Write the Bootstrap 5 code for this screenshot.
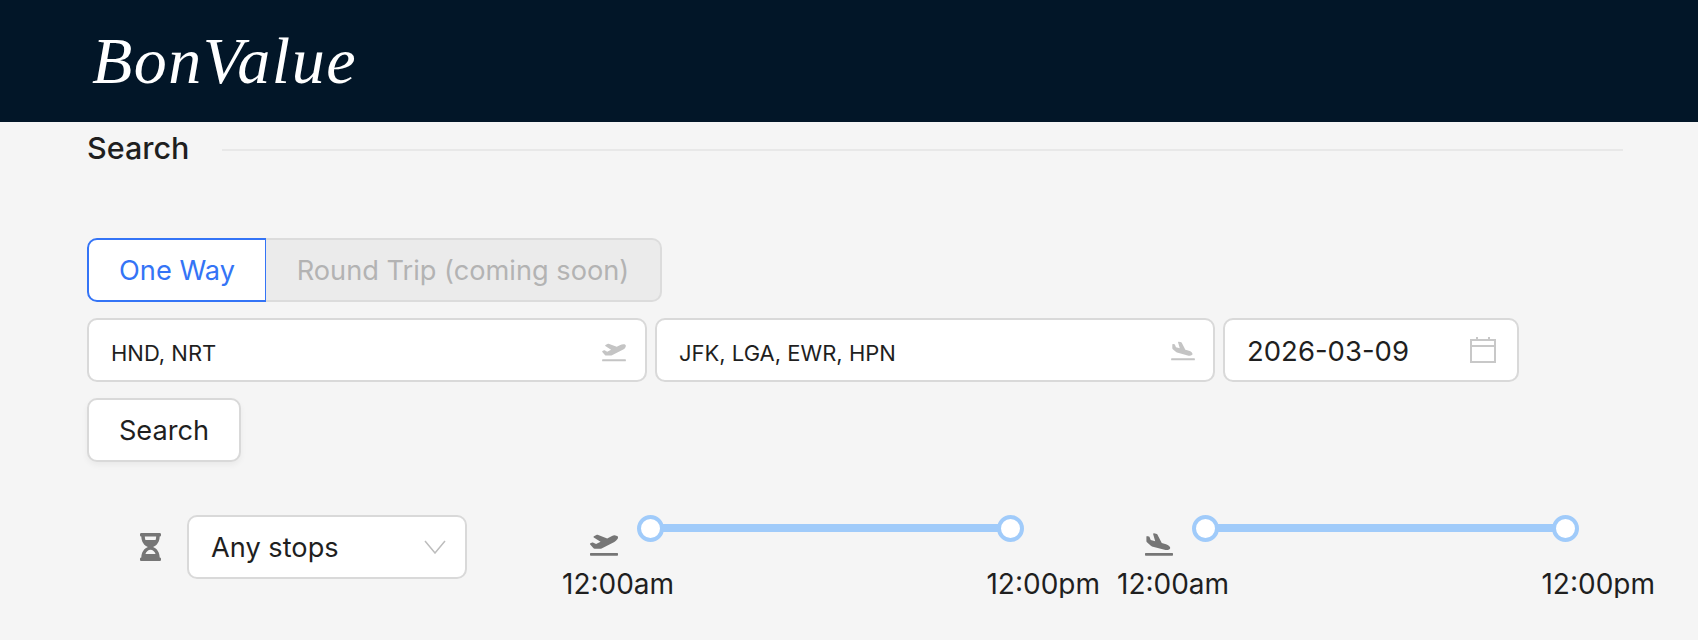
<!DOCTYPE html>
<html lang="en">
<head>
  <meta charset="UTF-8" />
  <meta name="viewport" content="width=device-width, initial-scale=1.0" />
  <title>BonValue</title>
  <link href="https://cdn.jsdelivr.net/npm/bootstrap@5.3.3/dist/css/bootstrap.min.css" rel="stylesheet" />
  <style>
    body {
      background-color: #f5f5f5;
      color: #1f1f1f;
      font-family: "Inter", "Liberation Sans", sans-serif;
      font-size: 27.5px;
    }

    .top-bar {
      background-color: #021628;
      height: 122px;
      padding: 0 0 0 92px;
    }

    .brand-script {
      color: #fff;
      font-family: "Liberation Serif", serif;
      font-style: italic;
      font-size: 66px;
      line-height: 1;
      letter-spacing: 1.5px;
      padding: 0;
      margin: 0;
    }

    .brand-script:hover {
      color: #fff;
    }

    .page-wrap {
      padding: 0 75px 0 87px;
    }

    .section-head {
      height: 56px;
      margin-bottom: 60px;
    }

    .section-head h2 {
      font-family: "Inter", sans-serif;
      font-size: 30.5px;
      font-weight: 500;
      margin: 0 33px 3px 0;
      color: #1f1f1f;
    }

    .section-rule {
      height: 2px;
      background-color: #e8e8e8;
    }

    .trip-btn {
      height: 64px;
      font-size: 27.2px;
      border: 2px solid #dcdcdc;
      border-radius: 10px;
      padding: 1px 0 0;
      line-height: 1;
    }

    .trip-btn.is-on {
      width: 180px;
      background-color: #fff;
      border-color: #3474f6;
      color: #3474f6;
    }

    .trip-btn.is-off,
    .trip-btn.is-off:disabled {
      width: 396px;
      background-color: #ebebeb;
      border-color: #dcdcdc;
      color: #b3b3b3;
      border-left: 0;
      opacity: 1;
    }

    .field-line {
      margin-top: 16px;
      gap: 8px;
    }

    .field-box {
      height: 64px;
    }

    .field-box .form-control,
    .field-box .form-select {
      height: 64px;
      border: 2px solid #d9d9d9;
      border-radius: 10px;
      background-color: #fff;
      background-image: none;
      color: #1f1f1f;
      box-shadow: none;
    }

    .field-air { width: 560px; }
    .field-air .form-control { font-size: 22px; padding: 6px 60px 0 22px; }
    .field-date { width: 296px; }
    .field-date .form-control { font-size: 27.5px; padding: 2px 60px 0 22px; }
    .field-stops { width: 280px; }
    .field-stops .form-select { font-size: 27.2px; padding: 3px 50px 0 22px; }

    .field-glyph {
      position: absolute;
      top: 50%;
      transform: translateY(-50%);
      pointer-events: none;
    }

    .go-btn {
      display: block;
      margin-top: 16px;
      width: 154px;
      height: 64px;
      font-size: 27.2px;
      padding: 3px 0 0;
      background-color: #fff;
      color: #1f1f1f;
      border: 2px solid #d9d9d9;
      border-radius: 10px;
      box-shadow: 0 3px 6px rgba(0, 0, 0, 0.05);
    }

    .filter-line {
      margin-top: 53px;
      margin-right: -32px;
      align-items: flex-start;
    }

    .stops-group {
      padding-left: 53px;
      width: 475px;
      flex: none;
    }

    .hour-icon {
      width: 21px;
      height: 28px;
      margin-right: 26px;
      flex: none;
    }

    .time-group {
      width: 555px;
      flex: none;
    }

    .time-group.is-last {
      width: 538px;
    }

    .time-head {
      height: 48px;
      padding-left: 28px;
    }

    .time-icon {
      width: 28px;
      height: 23px;
      margin-top: 18px;
      margin-right: 19px;
      flex: none;
    }

    .slide-rail {
      width: 387px;
      align-items: center;
      height: 28px;
      margin-top: -1px;
    }

    .slide-knob {
      width: 27px;
      height: 27px;
      border-radius: 50%;
      background-color: #fff;
      border: 4px solid #a0cbfa;
      flex: none;
    }

    .slide-track {
      height: 8px;
      background-color: #a0cbfa;
      flex: 1;
      margin: 0 -1px;
    }

    .time-labels {
      width: 538px;
      font-size: 28px;
      line-height: 1;
      padding-top: 7px;
    }
  </style>
</head>
<body>

  <!-- Header -->
  <nav class="navbar top-bar align-items-center">
    <a class="navbar-brand brand-script" href="#">BonValue</a>
  </nav>

  <div class="page-wrap">
    <div class="section-head d-flex align-items-center">
      <h2>Search</h2>
      <div class="section-rule flex-grow-1"></div>
    </div>

    <!-- Trip type -->
    <div class="btn-group" role="group">
      <button type="button" class="btn trip-btn is-on">One Way</button>
      <button type="button" class="btn trip-btn is-off" disabled>Round Trip (coming soon)</button>
    </div>

    <!-- Airports and date -->
    <div class="d-flex field-line">
      <div class="field-box field-air position-relative">
        <input type="text" class="form-control" value="HND, NRT" />
        <svg class="field-glyph" style="right:21px;margin-top:2px" width="24" height="19" viewBox="0 0 640 512" fill="#c4c4c4"><path d="M624 448H16c-8.84 0-16 7.16-16 16v32c0 8.84 7.16 16 16 16h608c8.84 0 16-7.16 16-16v-32c0-8.84-7.16-16-16-16zM80.55 341.27c6.28 6.84 15.1 10.72 24.33 10.71l130.54-.18a65.62 65.62 0 0 0 29.64-7.12l290.96-147.65c26.74-13.57 50.71-32.94 67.02-58.31 18.31-28.48 20.3-49.09 13.07-63.65-7.21-14.57-24.74-25.27-58.25-27.45-29.85-1.94-59.54 5.92-86.28 19.48l-98.51 49.99-218.7-82.06a17.799 17.799 0 0 0-18-1.11L90.62 67.29c-10.67 5.41-13.25 19.65-5.17 28.53l156.22 98.1-103.21 52.38-72.35-36.47a17.804 17.804 0 0 0-16.07.02L9.91 230.22c-10.44 5.3-13.19 19.12-5.57 28.08l76.21 82.97z"/></svg>
      </div>
      <div class="field-box field-air position-relative">
        <input type="text" class="form-control" value="JFK, LGA, EWR, HPN" />
        <svg class="field-glyph" style="right:20px;margin-top:1px" width="24" height="19" viewBox="0 0 640 512" fill="#c4c4c4"><path d="M624 448H16c-8.84 0-16 7.16-16 16v32c0 8.84 7.16 16 16 16h608c8.84 0 16-7.16 16-16v-32c0-8.84-7.16-16-16-16zM44.81 205.66l88.74 80a62.607 62.607 0 0 0 25.47 13.93l287.6 78.35c26.48 7.21 54.56 8.72 81 1.36 29.67-8.27 43.44-21.21 47.25-35.71 3.83-14.5-1.73-32.71-23.37-54.96-19.28-19.82-44.35-32.79-70.83-40l-97.51-26.56L282.8 30.22c-1.51-5.81-5.95-10.35-11.66-11.91L206.05.58c-10.56-2.88-20.9 5.32-20.71 16.44l47.92 164.21-102.2-27.84-27.59-67.88c-1.93-4.89-6.01-8.57-11.02-9.93L52.72 64.75c-10.34-2.82-20.53 5-20.72 15.88l.23 101.78c.19 8.91 6.03 17.34 12.58 23.25z"/></svg>
      </div>
      <div class="field-box field-date position-relative">
        <input type="text" class="form-control" value="2026-03-09" />
        <svg class="field-glyph" style="right:23px" width="26" height="26" viewBox="0 0 26 26" fill="none" stroke="#c8c8c8" stroke-width="2"><rect x="1" y="3" width="24" height="22"/><path d="M1 9h24M7 0v4M19 0v4"/></svg>
      </div>
    </div>

    <button type="button" class="btn go-btn">Search</button>

    <!-- Filters -->
    <div class="d-flex filter-line">
      <div class="d-flex align-items-center stops-group">
        <svg class="hour-icon" viewBox="0 0 384 512" fill="#767676"><path d="M360 0H24C10.745 0 0 10.745 0 24v16c0 13.255 10.745 24 24 24 0 90.965 51.016 167.734 120.842 192C75.016 280.266 24 357.035 24 448c-13.255 0-24 10.745-24 24v16c0 13.255 10.745 24 24 24h336c13.255 0 24-10.745 24-24v-16c0-13.255-10.745-24-24-24 0-90.965-51.016-167.734-120.842-192C308.984 231.734 360 154.965 360 64c13.255 0 24-10.745 24-24V24c0-13.255-10.745-24-24-24zm-75.078 384H99.08c17.059-46.797 52.096-80 92.92-80 40.821 0 75.862 33.196 92.922 80zm.019-256H99.078C91.988 108.548 88 86.748 88 64h208c0 22.805-3.987 44.587-11.059 64z"/></svg>
        <div class="field-box field-stops position-relative">
          <select class="form-select"><option>Any stops</option></select>
          <svg class="field-glyph" style="right:21px" width="22" height="14" viewBox="0 0 22 14" fill="none" stroke="#bdbdbd" stroke-width="1.5"><path d="M1 1l10 12L21 1"/></svg>
        </div>
      </div>

      <div class="time-group">
        <div class="d-flex time-head">
          <svg class="time-icon" viewBox="0 0 640 512" fill="#767676"><path d="M624 448H16c-8.84 0-16 7.16-16 16v32c0 8.84 7.16 16 16 16h608c8.84 0 16-7.16 16-16v-32c0-8.84-7.16-16-16-16zM80.55 341.27c6.28 6.84 15.1 10.72 24.33 10.71l130.54-.18a65.62 65.62 0 0 0 29.64-7.12l290.96-147.65c26.74-13.57 50.71-32.94 67.02-58.31 18.31-28.48 20.3-49.09 13.07-63.65-7.21-14.57-24.74-25.27-58.25-27.45-29.85-1.94-59.54 5.92-86.28 19.48l-98.51 49.99-218.7-82.06a17.799 17.799 0 0 0-18-1.11L90.62 67.29c-10.67 5.41-13.25 19.65-5.17 28.53l156.22 98.1-103.21 52.38-72.35-36.47a17.804 17.804 0 0 0-16.07.02L9.91 230.22c-10.44 5.3-13.19 19.12-5.57 28.08l76.21 82.97z"/></svg>
          <div class="d-flex slide-rail">
            <div class="slide-knob"></div>
            <div class="slide-track"></div>
            <div class="slide-knob"></div>
          </div>
        </div>
        <div class="d-flex justify-content-between time-labels"><span>12:00am</span><span>12:00pm</span></div>
      </div>

      <div class="time-group is-last">
        <div class="d-flex time-head">
          <svg class="time-icon" viewBox="0 0 640 512" fill="#767676"><path d="M624 448H16c-8.84 0-16 7.16-16 16v32c0 8.84 7.16 16 16 16h608c8.84 0 16-7.16 16-16v-32c0-8.84-7.16-16-16-16zM44.81 205.66l88.74 80a62.607 62.607 0 0 0 25.47 13.93l287.6 78.35c26.48 7.21 54.56 8.72 81 1.36 29.67-8.27 43.44-21.21 47.25-35.71 3.83-14.5-1.73-32.71-23.37-54.96-19.28-19.82-44.35-32.79-70.83-40l-97.51-26.56L282.8 30.22c-1.51-5.81-5.95-10.35-11.66-11.91L206.05.58c-10.56-2.88-20.9 5.32-20.71 16.44l47.92 164.21-102.2-27.84-27.59-67.88c-1.93-4.89-6.01-8.57-11.02-9.93L52.72 64.75c-10.34-2.82-20.53 5-20.72 15.88l.23 101.78c.19 8.91 6.03 17.34 12.58 23.25z"/></svg>
          <div class="d-flex slide-rail">
            <div class="slide-knob"></div>
            <div class="slide-track"></div>
            <div class="slide-knob"></div>
          </div>
        </div>
        <div class="d-flex justify-content-between time-labels"><span>12:00am</span><span>12:00pm</span></div>
      </div>
    </div>
  </div>

  <script src="https://cdn.jsdelivr.net/npm/bootstrap@5.3.3/dist/js/bootstrap.bundle.min.js"></script>
</body>
</html>
